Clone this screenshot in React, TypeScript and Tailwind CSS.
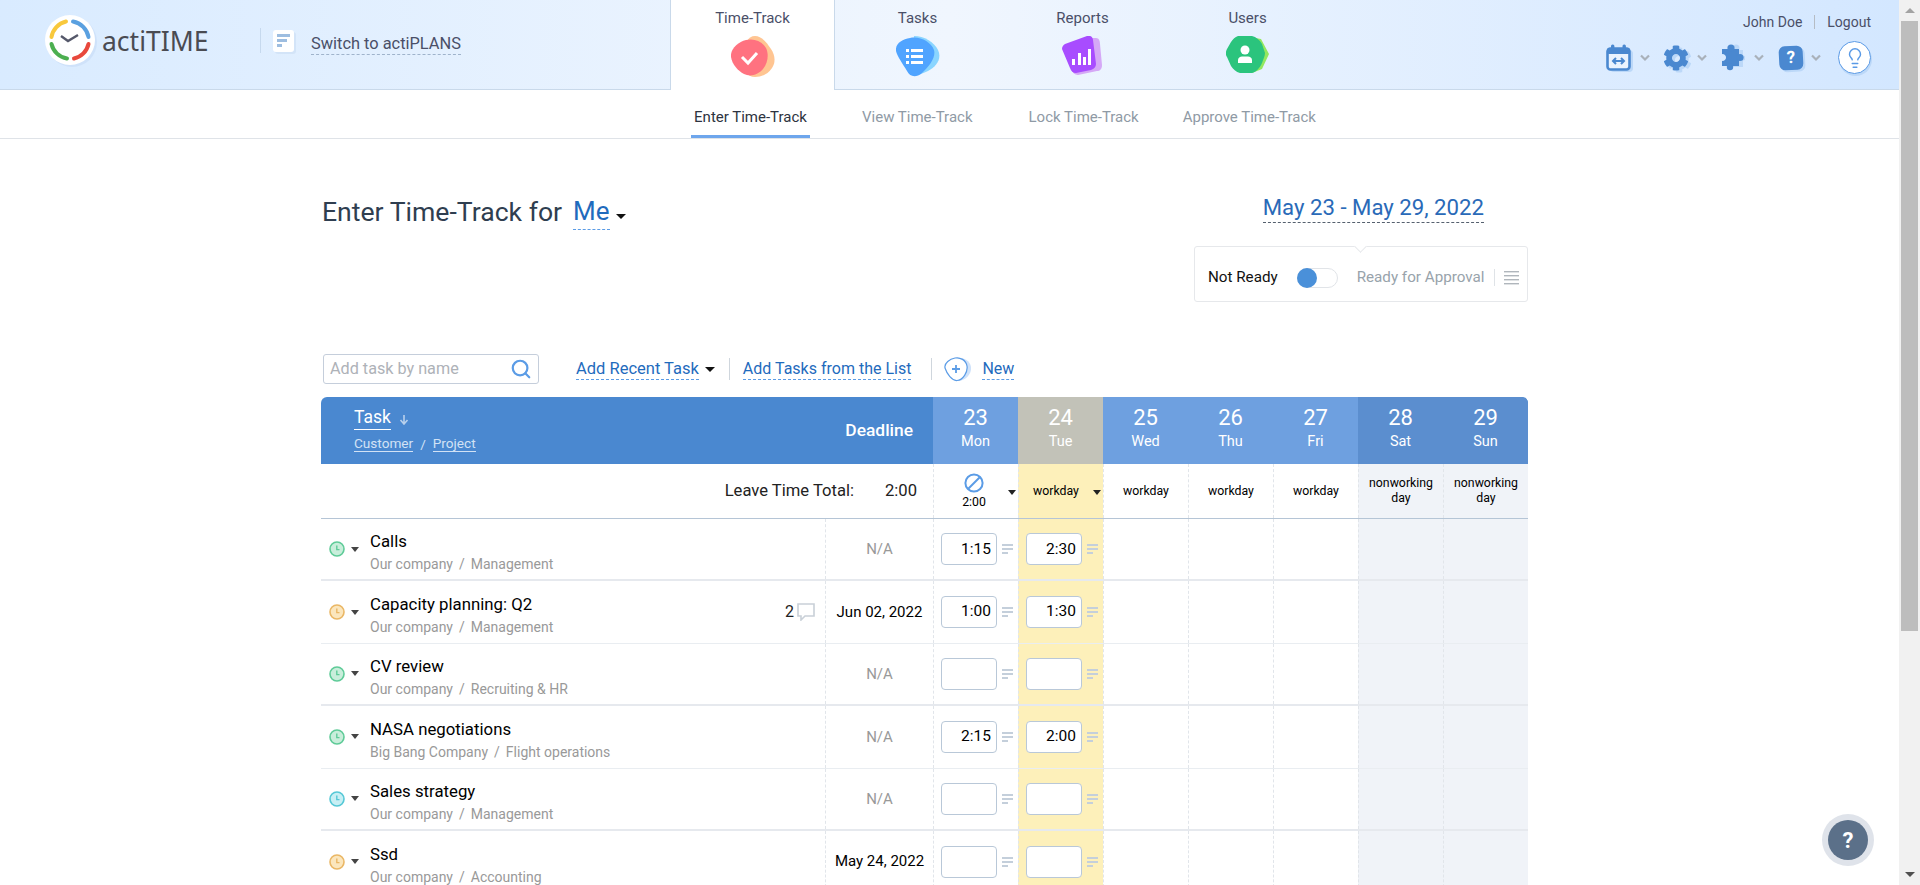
import { FaCog } from "react-icons/fa";
import { Lightbulb, Search } from "lucide-react";

const roboto = "font-['Roboto',sans-serif]";

function Caret({ className = "" }: { className?: string }) {
  return <span className={`inline-block w-0 h-0 border-x-[4px] border-x-transparent border-t-[5px] border-t-[#222] ${className}`} />;
}

function BigCaret({ className = "" }: { className?: string }) {
  return <span className={`inline-block w-0 h-0 border-x-[5px] border-x-transparent border-t-[5px] border-t-[#111] ${className}`} />;
}

function Chevron({ className = "ml-[8px] mr-[14px]" }: { className?: string }) {
  return (
    <svg width="10" height="8" viewBox="0 0 10 8" className={className}>
      <path d="M1 1.5 L5 5.5 L9 1.5" fill="none" stroke="#a9b1ba" strokeWidth="2.2" />
    </svg>
  );
}

function Logo() {
  return (
    <svg width="54" height="54" viewBox="0 0 54 54" className="shrink-0">
      <circle cx="28" cy="28" r="25" fill="#cfe2fa" />
      <circle cx="26" cy="26" r="25" fill="#fff" />
      <g fill="none" strokeWidth="4" strokeLinecap="round">
        <path d="M7.5 23 A19 19 0 0 1 22 7.5" stroke="#f8c83c" />
        <path d="M29 7.5 A19 19 0 0 1 44.5 23" stroke="#5aa0e0" />
        <path d="M44.5 30 A19 19 0 0 1 30 44.5" stroke="#e8483c" />
        <path d="M23 44.5 A19 19 0 0 1 7.5 30" stroke="#4caf50" />
      </g>
      <path d="M17 22 L24 27 L34 21" fill="none" stroke="#55586a" strokeWidth="2.4" />
    </svg>
  );
}

function TimeTrackIcon() {
  return (
    <svg width="44" height="41" viewBox="0 0 44 41">
      <path d="M24 0 C31 0 36 7 40 13 C44 19 45 26 41 32 C37 38 31 41 24 41 C16 41 12 34 12 20 C12 8 17 0 24 0Z" fill="#ffc592" />
      <path d="M15 4 C23 2 31 5 35 12 C38 18 37 27 32 33 C27 39 19 41 13 38 C7 35 1 28 0 21 C-1 13 7 6 15 4Z" fill="#ff7280" />
      <path d="M11 21 L17 27 L26 17" fill="none" stroke="#fff" strokeWidth="3" />
    </svg>
  );
}

function TasksIcon() {
  return (
    <svg width="44" height="41" viewBox="0 0 44 41">
      <path d="M18 0 C28 0 38 6 42 14 C46 22 41 30 32 35 C24 39 16 41 14 38 Z" fill="#8ad5ff" />
      <path d="M14 2 C24 0 35 6 38 14 C40 21 34 30 26 37 C20 42 14 41 11 35 C7 28 1 20 0 15 C-1 8 6 3 14 2Z" fill="#50a4ff" />
      <g fill="#fff">
        <rect x="10" y="13" width="3" height="3" />
        <rect x="10" y="19" width="3" height="3" />
        <rect x="10" y="25" width="3" height="3" />
        <rect x="15" y="13" width="12" height="3" />
        <rect x="15" y="19" width="12" height="3" />
        <rect x="15" y="25" width="12" height="3" />
      </g>
    </svg>
  );
}

function ReportsIcon() {
  return (
    <svg width="41" height="40" viewBox="0 0 41 40">
      <path d="M24 2 L34 2 C37 2 38 5 38 8 L40 29 C40 33 38 35 35 35 L16 39 C13 39 10 36 9 33 Z" fill="#d5a8f6" />
      <path d="M3 8 L25 0 C28 -1 31 1 31 4 L34 28 C34 31 32 33 29 34 L14 37 C11 37 9 35 8 32 L0 13 C0 11 1 9 3 8Z" fill="#a84cff" />
      <g fill="#fff">
        <rect x="10" y="23" width="3" height="6" />
        <rect x="16" y="17" width="3" height="12" />
        <rect x="21" y="21" width="3" height="8" />
        <rect x="26" y="13" width="3" height="16" />
      </g>
    </svg>
  );
}

function UsersIcon() {
  return (
    <svg width="44" height="38" viewBox="0 0 44 38">
      <path d="M24 1 L35 3 L43 18 L36 33 L26 37 L14 30 Z" fill="#93e85f" />
      <path d="M12 0 L26 0 C30 1 34 4 36 8 L39 17 C39 20 37 24 36 27 C34 32 30 36 26 37 L14 37 C10 36 7 33 5 30 L1 21 C-1 18 0 15 1 13 L5 6 C7 3 9 1 12 0Z" fill="#2bc47d" />
      <circle cx="19" cy="14" r="4.5" fill="#fff" />
      <path d="M12 27 L12 24 C12 22 14 20.5 16 20.5 L22 20.5 C24 20.5 26 22 26 24 L26 27 Z" fill="#fff" />
    </svg>
  );
}

function CalendarIcon() {
  return (
    <svg width="27" height="28" viewBox="0 0 27 28">
      <rect x="4" y="6" width="23" height="22" rx="4" fill="#bcd8f8" />
      <rect x="1.5" y="4.5" width="22" height="21" rx="3" fill="#eaf3fe" stroke="#4a88d0" strokeWidth="2.6" />
      <rect x="1" y="4" width="23" height="6" rx="2" fill="#4a88d0" />
      <rect x="5" y="0.5" width="3.4" height="6" rx="1.5" fill="#4a88d0" />
      <rect x="16.5" y="0.5" width="3.4" height="6" rx="1.5" fill="#4a88d0" />
      <path d="M7 17 H18 M10 14 L7 17 L10 20 M15 14 L18 17 L15 20" fill="none" stroke="#4a88d0" strokeWidth="2" />
    </svg>
  );
}

function PuzzleIcon() {
  return (
    <svg width="24" height="27" viewBox="0 0 24 27">
      <g fill="#bcd8f8">
        <rect x="6" y="6" width="16" height="17" />
        <circle cx="15" cy="4" r="3.5" />
        <circle cx="22" cy="14" r="2.5" />
      </g>
      <g fill="#4a88d0">
        <path d="M1 5 H18 V22 H1 V17 C4 17 5 15 5 13.5 C5 12 4 10 1 10 Z" />
        <circle cx="10" cy="4" r="3.6" />
        <circle cx="19" cy="13.5" r="3.6" />
        <circle cx="9" cy="23" r="3.2" />
      </g>
    </svg>
  );
}

function ClockIcon({ color, fill }: { color: string; fill: string }) {
  return (
    <svg width="16" height="16" viewBox="0 0 16 16" className="shrink-0">
      <circle cx="8" cy="8" r="7" fill={fill} stroke={color} strokeWidth="1.6" />
      <path d="M7.8 4.5 V8.6 H10.5" fill="none" stroke={color} strokeWidth="1.4" />
    </svg>
  );
}

function NoteIcon() {
  return (
    <svg width="11" height="10" viewBox="0 0 11 10" className="shrink-0">
      <rect x="0" y="0" width="11" height="2" fill="#c4cfdb" />
      <rect x="0" y="4" width="11" height="2" fill="#c4cfdb" />
      <rect x="0" y="8" width="6" height="2" fill="#c4cfdb" />
    </svg>
  );
}

const vline = "border-l border-dashed border-[#e1e5ea]";

function TimeCell({ value, today }: { value: string; today?: boolean }) {
  return (
    <div className={`${vline} flex items-center pl-[7px] ${today ? "bg-[#fdf0ba]" : ""}`}>
      <div className="w-[56px] h-[32px] border border-[#b9c8d8] rounded-[4px] bg-white flex items-center justify-end pr-[5px] text-[15.5px] text-black">
        {value}
      </div>
      <div className="ml-[5px]">
        <NoteIcon />
      </div>
    </div>
  );
}

type Row = {
  title: string;
  customer: string;
  project: string;
  deadline: string;
  mon: string;
  tue: string;
  color: string;
  fill: string;
  comments?: number;
  thick?: boolean;
};

const rows: Row[] = [
  { title: "Calls", customer: "Our company", project: "Management", deadline: "N/A", mon: "1:15", tue: "2:30", color: "#5fcb98", fill: "#c9eedb", thick: true },
  { title: "Capacity planning: Q2", customer: "Our company", project: "Management", deadline: "Jun 02, 2022", mon: "1:00", tue: "1:30", color: "#eab765", fill: "#fbe6bd", comments: 2 },
  { title: "CV review", customer: "Our company", project: "Recruiting & HR", deadline: "N/A", mon: "", tue: "", color: "#5fcb98", fill: "#c9eedb", thick: true },
  { title: "NASA negotiations", customer: "Big Bang Company", project: "Flight operations", deadline: "N/A", mon: "2:15", tue: "2:00", color: "#5fcb98", fill: "#c9eedb" },
  { title: "Sales strategy", customer: "Our company", project: "Management", deadline: "N/A", mon: "", tue: "", color: "#55c8d6", fill: "#c8eff4", thick: true },
  { title: "Ssd", customer: "Our company", project: "Accounting", deadline: "May 24, 2022", mon: "", tue: "", color: "#eab765", fill: "#fbe6bd" },
];

const days = [
  { n: "23", d: "Mon", c: "bg-[#6ea0e0]" },
  { n: "24", d: "Tue", c: "bg-[#c2c2b8]" },
  { n: "25", d: "Wed", c: "bg-[#6ea0e0]" },
  { n: "26", d: "Thu", c: "bg-[#6ea0e0]" },
  { n: "27", d: "Fri", c: "bg-[#6ea0e0]" },
  { n: "28", d: "Sat", c: "bg-[#5b8ecf]" },
  { n: "29", d: "Sun", c: "bg-[#5b8ecf]" },
];

const cols = "grid grid-cols-[504px_108px_repeat(7,85px)]";

function Header() {
  const tabs = [
    { name: "Tasks", icon: <TasksIcon /> },
    { name: "Reports", icon: <ReportsIcon /> },
    { name: "Users", icon: <UsersIcon /> },
  ];
  return (
    <header className="h-[90px] flex border-b border-[#c9d9ea] bg-gradient-to-r from-[#d9ebff] via-[#f0f6fe] to-[#d3e7ff]">
      <div className="w-[670px] flex items-center pl-[44px] pb-[8px]">
        <Logo />
        <span className="font-['Noto_Sans',sans-serif] text-[26.5px] leading-[36px] text-[#4a4b52] ml-[4px] w-[105px] whitespace-nowrap">actiTIME</span>
        <div className="w-px h-[25px] bg-[#c6d9ee] ml-[53px]" />
        <div className="w-[21px] h-[22px] bg-white rounded-[3px] ml-[12px] shadow-[2px_2px_0_#d3e4f8] flex flex-col gap-[2px] justify-center pl-[4px]">
          <div className="w-[13px] h-[3px] bg-[#9dbde0]" />
          <div className="w-[10px] h-[3px] bg-[#9dbde0]" />
          <div className="w-[5px] h-[3px] bg-[#9dbde0]" />
        </div>
        <span className="ml-[17px] mt-[7px] text-[16.4px] leading-[20px] text-[#4a4f68] border-b border-dashed border-[#9fb3cb]">Switch to actiPLANS</span>
      </div>
      <div className="w-[165px] h-[90px] bg-white border-x border-[#c9d9ea] flex flex-col items-center pt-[8px] gap-[8px] shrink-0">
        <span className="text-[15px] leading-[20px] text-[#4a4f68]">Time-Track</span>
        <TimeTrackIcon />
      </div>
      {tabs.map((t) => (
        <div key={t.name} className="w-[165px] flex flex-col items-center pt-[8px] gap-[8px] shrink-0">
          <span className="text-[15px] leading-[20px] text-[#4a4f68]">{t.name}</span>
          {t.icon}
        </div>
      ))}
      <div className="flex-1 flex flex-col items-end pr-[28px] pt-[12px]">
        <div className="flex items-center text-[14px] leading-[20px] text-[#4a4f68]">
          <span>John Doe</span>
          <span className="w-px h-[14px] bg-[#b5bcc4] mx-[12px]" />
          <span>Logout</span>
        </div>
        <div className="flex items-center mt-[9px]">
          <CalendarIcon />
          <Chevron className="ml-[7px] mr-[13px]" />
          <FaCog className="text-[#4a88d0] text-[26px] drop-shadow-[3px_2px_0_#bcd8f8]" />
          <Chevron />
          <PuzzleIcon />
          <Chevron className="ml-[9px] mr-[15px]" />
          <div className="w-[24px] h-[24px] rounded-[6px] -rotate-3 bg-[#4a88d0] text-white font-bold text-[17px] flex items-center justify-center shadow-[2px_2px_0_#bcd8f8]">?</div>
          <Chevron className="ml-[8px] mr-[17px]" />
          <div className="w-[33px] h-[33px] rounded-full bg-white border border-[#5a9ae6] flex items-center justify-center shadow-[1px_2px_0_#bcd8f8]">
            <Lightbulb size={22} strokeWidth={1.6} className="text-[#5a9ae6]" />
          </div>
        </div>
      </div>
    </header>
  );
}

function SubNav() {
  return (
    <nav className="h-[49px] border-b border-[#dfe3e8] flex pl-[691px] text-[15px]">
      <div className="w-[119px] h-[48px] flex items-center justify-center text-[#2d3340] border-b-[3px] border-[#6ea6ec] pt-[10px]">Enter Time-Track</div>
      <div className="ml-[52px] h-[48px] flex items-center text-[#8f9aa5] pt-[7px]">View Time-Track</div>
      <div className="ml-[56px] h-[48px] flex items-center text-[#8f9aa5] pt-[7px]">Lock Time-Track</div>
      <div className="ml-[44px] h-[48px] flex items-center text-[#8f9aa5] pt-[7px]">Approve Time-Track</div>
    </nav>
  );
}

function TopBlock() {
  return (
    <div className="flex justify-between h-[215px]">
      <div className="pt-[54px] flex items-start pl-[1px]">
        <span className="text-[26.6px] leading-[38px] text-[#2f3e50]">Enter Time-Track for</span>
        <span className="ml-[11px] text-[26px] leading-[36px] text-[#1f6bbd] border-b border-dashed border-[#5b9ce6]">Me</span>
        <BigCaret className="ml-[6px] mt-[21px]" />
      </div>
      <div className="flex flex-col items-end pt-[53px]">
        <span className="mr-[44px] text-[22.2px] leading-[30px] text-[#2a6ab8] border-b border-dashed border-[#55606e]">May 23 - May 29, 2022</span>
        <div className="relative mt-[23px] w-[334px] h-[56px] border border-[#e6e8eb] rounded-[3px] flex items-center pl-[13px] pt-[7px] text-[15.2px]">
          <span className="absolute -top-[5px] left-[161px] w-[9px] h-[9px] bg-white border-r border-b border-[#e6e8eb] rotate-45" />
          <span className="text-[#111]">Not Ready</span>
          <div className="ml-[19px] w-[41px] h-[20px] rounded-full border border-[#e1e4e8] bg-white relative">
            <span className="absolute -left-px -top-px w-[20px] h-[20px] rounded-full bg-[#4a90d9]" />
          </div>
          <span className="ml-[19px] text-[#98a3ab]">Ready for Approval</span>
          <span className="w-px h-[17px] bg-[#dfe3e7] ml-[10px]" />
          <svg width="15" height="14" viewBox="0 0 15 14" className="ml-[9px]">
            <g fill="#b0b6bc">
              <rect y="0" width="15" height="1.4" />
              <rect y="4" width="15" height="1.4" />
              <rect y="8" width="15" height="1.4" />
              <rect y="12" width="15" height="1.4" />
            </g>
          </svg>
        </div>
      </div>
    </div>
  );
}

function Toolbar() {
  const link = "leading-[20px] text-[#1f6bbd] border-b border-dashed border-[#5b9ce6]";
  return (
    <div className="flex items-center h-[30px] pl-[2px] mb-[13px]">
      <div className="w-[216px] h-[30px] border border-[#c5cedb] rounded-[3px] flex items-center justify-between pl-[6px] pr-[6px]">
        <span className="text-[16.2px] text-[#aeb2b8]">Add task by name</span>
        <Search size={22} strokeWidth={2.4} className="text-[#5b9ce6]" />
      </div>
      <span className={`ml-[37px] text-[16.5px] ${link}`}>Add Recent Task</span>
      <BigCaret className="ml-[6px]" />
      <span className="w-px h-[22px] bg-[#cfd6dd] ml-[14px]" />
      <span className={`ml-[13px] text-[16px] ${link}`}>Add Tasks from the List</span>
      <span className="w-px h-[22px] bg-[#cfd6dd] ml-[20px]" />
      <svg width="28" height="25" viewBox="0 0 28 25" className="ml-[12px]">
        <path d="M12 1 C18 0 26 3 27 10 C28 17 21 24 14 24 C8 24 3 18 1 11 C0 6 6 2 12 1Z" fill="#cfe2fa" />
        <path d="M11 1 C16 0 22 3 23 9 C24 15 19 23 13 23.5 C8 24 3 17 1 11 C0 6 6 2 11 1Z" fill="#fff" stroke="#5b9ce6" strokeWidth="1.2" />
        <path d="M12 8 V16 M8 12 H16" stroke="#5b9ce6" strokeWidth="1.8" />
      </svg>
      <span className={`ml-[10px] text-[16px] ${link}`}>New</span>
    </div>
  );
}

function TableHead() {
  return (
    <div className={`${cols} h-[67px] rounded-t-[6px] overflow-hidden bg-[#4a88d0] text-white`}>
      <div className="pl-[33px] pt-[9px]">
        <div className="flex items-center">
          <span className="text-[17.5px] leading-[23px] border-b border-white">Task</span>
          <svg width="10" height="10" viewBox="0 0 10 10" className="ml-[8px] mt-[4px]">
            <path d="M5 0 V8 M1.5 5 L5 9 L8.5 5" fill="none" stroke="#b8d0ec" strokeWidth="1.6" />
          </svg>
        </div>
        <div className="flex items-center mt-[5px] text-[13.6px] leading-[16px] text-[#d2e2f5]">
          <span className="border-b border-[#d2e2f5]">Customer</span>
          <span className="mx-[7px]">/</span>
          <span className="border-b border-[#d2e2f5]">Project</span>
        </div>
      </div>
      <div className="flex items-center justify-end pr-[20px] text-[17.4px] font-medium">Deadline</div>
      {days.map((d) => (
        <div key={d.n} className={`${d.c} flex flex-col items-center pt-[8px]`}>
          <span className="text-[22px] leading-[26px]">{d.n}</span>
          <span className="text-[14.5px] leading-[20px] mt-[1px]">{d.d}</span>
        </div>
      ))}
    </div>
  );
}

function LeaveRow() {
  return (
    <div className={`${cols} h-[55px] border-b border-[#b5c5d6] text-[12.3px] text-black`}>
      <div className="col-span-2 flex items-center justify-end pr-[16px] text-[16.6px] text-[#222]">
        <span>Leave Time Total:</span>
        <span className="ml-[31px]">2:00</span>
      </div>
      <div className={`${vline} relative flex flex-col items-center pr-[4px] pt-[9px]`}>
        <svg width="20" height="20" viewBox="0 0 20 20">
          <circle cx="10" cy="10" r="8.6" fill="none" stroke="#5b9ce6" strokeWidth="2" />
          <path d="M4 16 L16 4" stroke="#5b9ce6" strokeWidth="2" />
        </svg>
        <span className="leading-[16px] mt-[1px]">2:00</span>
        <Caret className="absolute right-[2px] top-[26px]" />
      </div>
      <div className={`${vline} relative bg-[#fdf0ba] flex items-center justify-center pr-[10px]`}>
        workday
        <Caret className="absolute right-[2px] top-[26px]" />
      </div>
      <div className={`${vline} flex items-center justify-center`}>workday</div>
      <div className={`${vline} flex items-center justify-center`}>workday</div>
      <div className={`${vline} flex items-center justify-center`}>workday</div>
      <div className={`${vline} bg-[#f0f3f8] flex items-center justify-center text-center leading-[15px]`}>nonworking<br />day</div>
      <div className={`${vline} bg-[#f0f3f8] flex items-center justify-center text-center leading-[15px]`}>nonworking<br />day</div>
    </div>
  );
}

function TaskRow({ row }: { row: Row }) {
  return (
    <div className={`${cols} h-[62.4px] border-b ${row.thick ? "border-b-2 border-[#e6e9ee]" : "border-[#e9edf1]"}`}>
      <div className="flex items-center pl-[8px] pr-[10px]">
        <ClockIcon color={row.color} fill={row.fill} />
        <Caret className="ml-[6px] !border-t-[#444]" />
        <div className="ml-[11px] flex-1 pt-[5px]">
          <div className="text-[16.8px] leading-[22px] mt-[1px] text-black">{row.title}</div>
          <div className="text-[14px] leading-[20px] mt-[2px] text-[#999]">
            {row.customer}
            <span className="mx-[6px]">/</span>
            {row.project}
          </div>
        </div>
        {row.comments ? (
          <div className="flex items-center text-[16px] text-[#222]">
            {row.comments}
            <svg width="18" height="18" viewBox="0 0 18 18" className="ml-[3px]">
              <path d="M1 1 H17 V13 H8 L4 17 V13 H1 Z" fill="#fff" stroke="#c9d0d8" strokeWidth="1.6" />
            </svg>
          </div>
        ) : null}
      </div>
      <div className={`${vline} flex items-center justify-center text-[15px] ${row.deadline === "N/A" ? "text-[#999]" : "text-black"}`}>{row.deadline}</div>
      <TimeCell value={row.mon} />
      <TimeCell value={row.tue} today />
      <div className={vline} />
      <div className={vline} />
      <div className={vline} />
      <div className={`${vline} bg-[#f0f3f8]`} />
      <div className={`${vline} bg-[#f0f3f8]`} />
    </div>
  );
}

function Scrollbar() {
  return (
    <div className="w-[21px] bg-[#f1f1f1] flex flex-col items-center shrink-0">
      <div className="h-[21px] flex items-center justify-center">
        <div className="w-0 h-0 border-x-[5px] border-x-transparent border-b-[5px] border-b-[#a3a3a3]" />
      </div>
      <div className="w-[17px] h-[610px] bg-[#bdbdbd]" />
      <div className="flex-1" />
      <div className="h-[21px] flex items-center justify-center">
        <div className="w-0 h-0 border-x-[5px] border-x-transparent border-t-[5px] border-t-[#505050]" />
      </div>
    </div>
  );
}

export default function App() {
  return (
    <div className={`${roboto} relative w-[1920px] h-[885px] flex overflow-hidden bg-white`}>
      <div className="w-[1899px] shrink-0">
        <Header />
        <SubNav />
        <main className="ml-[321px] w-[1207px]">
          <TopBlock />
          <Toolbar />
          <TableHead />
          <LeaveRow />
          {rows.map((r) => (
            <TaskRow key={r.title} row={r} />
          ))}
        </main>
      </div>
      <Scrollbar />
      <div className="absolute left-[1822px] top-[814px] w-[52px] h-[52px] rounded-full bg-[#dfe3ea] flex items-center justify-center">
        <div className="w-[40px] h-[40px] rounded-full bg-[#5b7089] text-white text-[22px] font-bold flex items-center justify-center">?</div>
      </div>
    </div>
  );
}
